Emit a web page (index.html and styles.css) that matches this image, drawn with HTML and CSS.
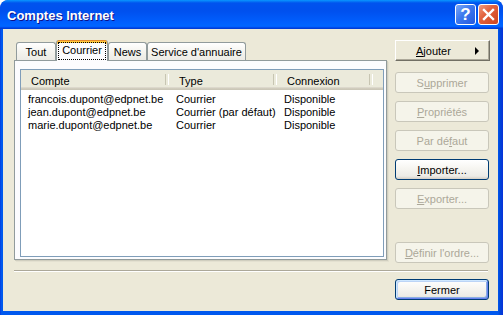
FILE: index.html
```html
<!DOCTYPE html>
<html lang="fr">
<head>
    <meta charset="UTF-8">
    <title>Comptes Internet</title>
    <link rel="stylesheet" href="styles.css">
</head>
<body>
    <div class="window">
        <div class="titlebar">
            <span class="title">Comptes Internet</span>
            <div class="caption-btn help">?</div>
            <div class="caption-btn close">
                <svg width="21" height="21" viewBox="0 0 21 21">
                    <path d="M6 6 L15 15 M15 6 L6 15" stroke="#fff" stroke-width="2.4" stroke-linecap="square"/>
                </svg>
            </div>
        </div>

        <div class="client">
            <div class="main">
                <div class="tabs-area">
                    <div class="tabstrip">
                        <div class="tab tab-all">Tout</div>
                        <div class="tab tab-mail selected"><span class="focus">Courrier</span></div>
                        <div class="tab tab-news">News</div>
                        <div class="tab tab-dir">Service d'annuaire</div>
                    </div>
                    <div class="panel">
                        <div class="listview">
                            <div class="lv-head">
                                <div class="hcell col-account">Compte</div>
                                <div class="hcell col-type">Type</div>
                                <div class="hcell col-conn">Connexion</div>
                            </div>
                            <div class="lv-rows">
                                <div class="row">
                                    <div class="cell col-account">francois.dupont@edpnet.be</div>
                                    <div class="cell col-type">Courrier</div>
                                    <div class="cell col-conn">Disponible</div>
                                </div>
                                <div class="row">
                                    <div class="cell col-account">jean.dupont@edpnet.be</div>
                                    <div class="cell col-type">Courrier (par défaut)</div>
                                    <div class="cell col-conn">Disponible</div>
                                </div>
                                <div class="row">
                                    <div class="cell col-account">marie.dupont@edpnet.be</div>
                                    <div class="cell col-type">Courrier</div>
                                    <div class="cell col-conn">Disponible</div>
                                </div>
                            </div>
                        </div>
                    </div>
                </div>

                <div class="side-buttons">
                    <div class="btn btn-menu"><span class="label"><u>A</u>jouter</span><span class="arrow"></span></div>
                    <div class="btn disabled first-gap">S<u>u</u>pprimer</div>
                    <div class="btn disabled"><u>P</u>ropriétés</div>
                    <div class="btn disabled">Par dé<u>f</u>aut</div>
                    <div class="btn"><u>I</u>mporter...</div>
                    <div class="btn disabled"><u>E</u>xporter...</div>
                    <div class="btn disabled bottom"><u>D</u>éfinir l'ordre...</div>
                </div>
            </div>

            <div class="separator"></div>

            <div class="footer">
                <div class="btn default">Fermer</div>
            </div>
        </div>
    </div>
</body>
</html>
```

FILE: styles.css
```css
* {
    box-sizing: border-box;
}

body {
    margin: 0;
    background: #ffffff;
    font-family: "Liberation Sans", Arial, sans-serif;
    font-size: 11px;
    color: #000000;
}

.window {
    width: 503px;
    height: 315px;
    display: flex;
    flex-direction: column;
    background: linear-gradient(to right, #0831D9 0, #0058EE 1px, #0058EE 498px, #0046D8 500px, #0831D9 503px);
    border-radius: 8px 8px 0 0;
    overflow: hidden;
}

.titlebar {
    height: 29px;
    flex: none;
    display: flex;
    align-items: center;
    padding: 0 4px 0 7px;
    background: linear-gradient(to bottom, #0997FF 0, #0053EE 3px, #0050EE 11px, #0060FF 23px, #0066FF 26px, #005BFF 27px, #003DD7 28px, #003DD7 29px);
    border-radius: 8px 8px 0 0;
}

.title {
    flex: 1;
    color: #ffffff;
    font-weight: bold;
    font-size: 13px;
    text-shadow: 1px 1px 0 #0F1089;
    padding-top: 1px;
}

.caption-btn {
    width: 21px;
    height: 21px;
    border: 1px solid #ffffff;
    border-radius: 3px;
    margin-left: 2px;
    display: flex;
    align-items: center;
    justify-content: center;
}

.caption-btn svg {
    margin: -1px;
}

.help {
    background: linear-gradient(135deg, #7BA7F7 0, #3C78EE 45%, #2558DE 100%);
    color: #ffffff;
    font-weight: bold;
    font-size: 17px;
}

.close {
    background: linear-gradient(135deg, #F09B7E 0, #E2623E 40%, #CC4420 100%);
}

.client {
    flex: 1;
    margin: 0 5px 4px 3px;
    background: #ECE9D8;
    padding: 11px 9px 0 11px;
    display: flex;
    flex-direction: column;
}

.main {
    display: flex;
    height: 223px;
}

.tabs-area {
    width: 374px;
    display: flex;
    flex-direction: column;
}

.tabstrip {
    height: 20px;
    display: flex;
    align-items: flex-end;
    padding-left: 2px;
    position: relative;
    z-index: 1;
}

.tab {
    height: 18px;
    border: 1px solid #919B9C;
    border-bottom: none;
    border-radius: 3px 3px 0 0;
    background: linear-gradient(#ffffff, #F3F2EC 60%, #ECEBE6);
    display: flex;
    align-items: center;
    justify-content: center;
    padding-top: 1px;
}

.tab-all {
    width: 40px;
}

.tab-mail {
    width: 52px;
}

.tab-news {
    width: 39px;
}

.tab-dir {
    width: 99px;
}

.tab.selected {
    height: 21px;
    margin-bottom: -1px;
    background: #FCFCFE;
    border-top: none;
    box-shadow: inset 0 1px 0 #E68B2C, inset 0 3px 0 #FFC73C;
    padding-top: 2px;
    align-items: flex-start;
}

.focus {
    display: block;
    outline: 1px dotted #000000;
    padding: 0 3px;
    height: 16px;
    line-height: 14px;
    margin-top: 1px;
}

.panel {
    width: 373px;
    height: 200px;
    border: 1px solid #919B9C;
    background: #FCFCFE;
    box-shadow: 1px 1px 0 #D0CEBF, 2px 2px 0 #E3E0D0;
    padding: 8px 0 0 5px;
}

.listview {
    width: 364px;
    height: 188px;
    border: 1px solid #7F9DB9;
    background: #ffffff;
}

.lv-head {
    display: flex;
    height: 20px;
    background: linear-gradient(#EBEADB 0, #EBEADB 17px, #E2DED6 17px, #D6D2C2 18px, #CBC7B8 19px);
}

.hcell {
    position: relative;
    padding: 5px 0 0 10px;
    line-height: 13px;
}

.hcell::after {
    content: "";
    position: absolute;
    right: 0;
    top: 4px;
    bottom: 5px;
    width: 2px;
    border-left: 1px solid #C7C5B2;
    border-right: 1px solid #ffffff;
}

.col-account {
    width: 148px;
}

.col-type {
    width: 108px;
}

.col-conn {
    width: 96px;
}

.lv-rows {
    padding-top: 3px;
}

.row {
    display: flex;
    height: 13px;
    line-height: 13px;
}

.cell {
    padding-left: 7px;
    white-space: nowrap;
}

.side-buttons {
    width: 94px;
    margin-left: 7px;
    display: flex;
    flex-direction: column;
    gap: 8px;
}

.btn {
    height: 21px;
    width: 94px;
    border: 1px solid #003C74;
    border-radius: 3px;
    background: linear-gradient(#ffffff 0, #F7F6F2 40%, #ECEBE6 85%, #D6D0C5 100%);
    display: flex;
    align-items: center;
    justify-content: center;
    white-space: nowrap;
}

.btn.disabled {
    border-color: #C9C7BA;
    background: #F5F4EA;
    color: #ACA899;
}

.btn-menu {
    width: 95px;
    border-radius: 0;
    border-color: #ffffff #716F64 #716F64 #ffffff;
    background: #ECE9D8;
    box-shadow: inset -1px -1px 0 #ACA899;
    justify-content: flex-start;
    padding: 0 10px 0 20px;
}

.btn-menu .label {
    flex: 1;
}

.arrow {
    width: 0;
    height: 0;
    border-top: 4px solid transparent;
    border-bottom: 4px solid transparent;
    border-left: 4px solid #000000;
}

.first-gap {
    margin-top: 3px;
}

.bottom {
    margin-top: auto;
}

.separator {
    width: 474px;
    height: 2px;
    margin-top: 7px;
    border-top: 1px solid #ACA899;
    border-bottom: 1px solid #ffffff;
}

.footer {
    display: flex;
    justify-content: flex-end;
    margin-top: 7px;
}

.btn.default {
    box-shadow: inset 1px 1px 0 #CEE7FF, inset -1px -1px 0 #6982EE, inset 2px 2px 0 #BCD4F6, inset -2px -2px 0 #89ADE4;
}
```
